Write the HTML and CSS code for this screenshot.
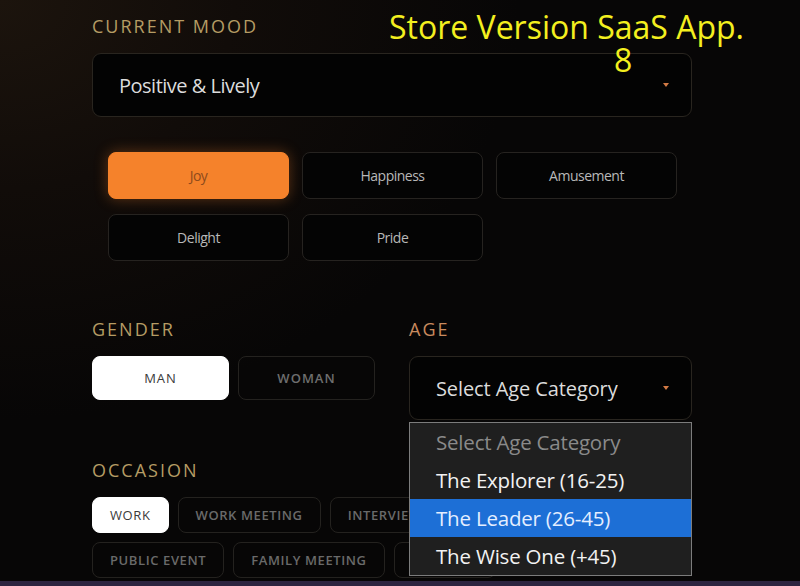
FILE: index.html
```html
<!DOCTYPE html>
<html lang="en">

<head>
    <meta charset="UTF-8">
    <meta name="viewport" content="width=device-width, initial-scale=1.0">
    <title>Outfit Studio | Preferences</title>
    <link rel="stylesheet" href="styles.css">
</head>

<body>
    <div class="screen">
        <div class="form-panel">
            <div class="field">
                <h3 class="field-label">Current Mood</h3>
                <div class="select-box">
                    <span>Positive &amp; Lively</span>
                    <span class="caret"></span>
                </div>
                <div class="mood-grid">
                    <div class="mood-chip active">Joy</div>
                    <div class="mood-chip">Happiness</div>
                    <div class="mood-chip">Amusement</div>
                    <div class="mood-chip">Delight</div>
                    <div class="mood-chip">Pride</div>
                </div>
            </div>

            <div class="two-col">
                <div class="field">
                    <h3 class="field-label">Gender</h3>
                    <div class="gender-toggle">
                        <div class="gender-option active">Man</div>
                        <div class="gender-option">Woman</div>
                    </div>
                </div>
                <div class="field age-field">
                    <h3 class="field-label age-label">Age</h3>
                    <div class="select-box age-select">
                        <span>Select Age Category</span>
                        <span class="caret"></span>
                    </div>
                    <ul class="dropdown">
                        <li class="placeholder">Select Age Category</li>
                        <li>The Explorer (16-25)</li>
                        <li class="hover">The Leader (26-45)</li>
                        <li>The Wise One (+45)</li>
                    </ul>
                </div>
            </div>

            <div class="field occasion-field">
                <h3 class="field-label">Occasion</h3>
                <div class="tag-list">
                    <div class="tag active">Work</div>
                    <div class="tag">Work Meeting</div>
                    <div class="tag">Interview</div>
                    <div class="tag">Conference</div>
                    <div class="tag">Public Event</div>
                    <div class="tag">Family Meeting</div>
                    <div class="tag">Wedding</div>
                </div>
            </div>
        </div>

        <div class="watermark">
            <div>Store Version SaaS App.</div>
            <div class="watermark-num">8</div>
        </div>
    </div>
    <div class="bottom-strip"></div>
</body>

</html>
```

FILE: styles.css
```css
* {
    margin: 0;
    padding: 0;
    box-sizing: border-box;
    font-family: "Open Sans", "Noto Sans", sans-serif;
}

html,
body {
    height: 100%;
}

body {
    display: flex;
    flex-direction: column;
    overflow: hidden;
    background-color: #070606;
}

.screen {
    position: relative;
    flex: 1;
    overflow: hidden;
    background: radial-gradient(ellipse 520px 420px at 0 0, #1c140d 0%, #110c09 45%, #070606 100%);
}

.bottom-strip {
    height: 5px;
    background-color: #2c2540;
}

.form-panel {
    width: 600px;
    margin-left: 92px;
    padding-top: 14px;
}

.field-label {
    font-size: 18px;
    font-weight: 400;
    letter-spacing: 2px;
    text-transform: uppercase;
    color: #b59c64;
    line-height: 24px;
    margin-bottom: 15px;
}

.age-label {
    color: #c98a5e;
}

.select-box {
    height: 64px;
    display: flex;
    align-items: center;
    justify-content: space-between;
    padding: 0 22px 0 26px;
    background-color: #030303;
    border: 1px solid #29251f;
    border-radius: 9px;
    color: #dcdcdc;
    font-size: 20px;
    letter-spacing: -0.5px;
}

.age-select {
    letter-spacing: -0.1px;
}

.caret {
    width: 0;
    height: 0;
    border-left: 3px solid transparent;
    border-right: 3px solid transparent;
    border-top: 4px solid #d27a45;
}

.mood-grid {
    display: grid;
    grid-template-columns: repeat(3, 181px);
    gap: 15px 13px;
    padding: 0 16px;
    margin-top: 35px;
}

.mood-chip {
    height: 47px;
    display: flex;
    align-items: center;
    justify-content: center;
    border: 1px solid #262320;
    border-radius: 8px;
    background-color: #040404;
    color: #b8b8b8;
    font-size: 14px;
    letter-spacing: -0.5px;
}

.mood-chip.active {
    background-color: #f5822b;
    border-color: #f5822b;
    color: #8e4b1c;
    box-shadow: 0 0 14px rgba(245, 130, 43, 0.35);
}

.two-col {
    display: grid;
    grid-template-columns: 1fr 283px;
    gap: 34px;
    margin-top: 56px;
}

.gender-toggle {
    display: flex;
    gap: 9px;
}

.gender-option {
    width: 137px;
    height: 44px;
    display: flex;
    align-items: center;
    justify-content: center;
    border: 1px solid #24221f;
    border-radius: 8px;
    color: #6e6e6e;
    font-size: 13px;
    font-weight: 600;
    letter-spacing: 1px;
    text-transform: uppercase;
}

.gender-option.active {
    background-color: #ffffff;
    border-color: #ffffff;
    color: #3a3a3a;
    font-weight: 400;
}

.age-field {
    position: relative;
}

.dropdown {
    position: absolute;
    left: 0;
    right: 0;
    top: 105px;
    z-index: 2;
    list-style: none;
    background-color: #1f1f1f;
    border: 1px solid #7c7c7c;
}

.dropdown li {
    height: 38px;
    display: flex;
    align-items: center;
    padding-left: 26px;
    color: #f2f2f2;
    font-size: 20.5px;
    letter-spacing: -0.2px;
}

.dropdown li.placeholder {
    color: #8a8a8a;
}

.dropdown li.hover {
    background-color: #1d6fd6;
    color: #e4eeff;
}

.occasion-field {
    margin-top: 38px;
}

.tag-list {
    display: flex;
    flex-wrap: wrap;
    gap: 9px;
}

.tag {
    height: 36px;
    display: flex;
    align-items: center;
    padding: 0 17px;
    border: 1px solid #24221f;
    border-radius: 8px;
    color: #6a6a6a;
    font-size: 13px;
    font-weight: 600;
    letter-spacing: 0.6px;
    text-transform: uppercase;
}

.tag.active {
    background-color: #ffffff;
    border-color: #ffffff;
    color: #3a3a3a;
    font-weight: 400;
}

.watermark {
    position: absolute;
    top: 10px;
    left: 389px;
    font-family: "Liberation Sans", Arial, sans-serif;
    font-size: 32px;
    line-height: 33px;
    color: #f3ef1f;
    pointer-events: none;
}

.watermark-num {
    padding-left: 225px;
}
```
